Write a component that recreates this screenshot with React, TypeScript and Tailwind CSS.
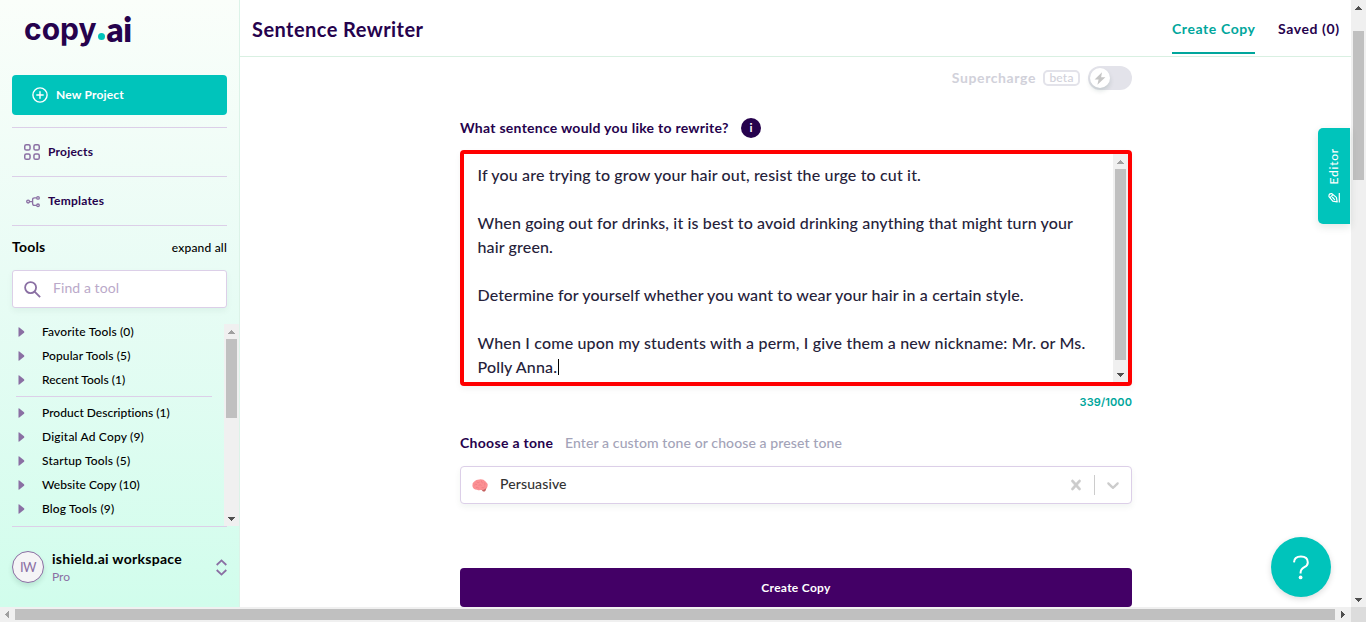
import React from "react";

type Dir = "up" | "down" | "left" | "right";

const arrowPaths: Record<Dir, string> = {
  up: "M0 6V5H1V4H2V3H3V2H4V3H5V4H6V5H7V6Z",
  down: "M0 2H7V3H6V4H5V5H4V6H3V5H2V4H1V3H0Z",
  left: "M5 0V7H4V6H3V5H2V4H1V3H2V2H3V1H4V0Z",
  right: "M2 0H3V1H4V2H5V3H6V4H5V5H4V6H3V7H2Z",
};

function Arrow({ dir, className }: { dir: Dir; className: string }) {
  return (
    <span className="flex h-[15px] w-[15px] shrink-0 items-center justify-center">
      <svg width="7" height="7" viewBox="0 0 7 7" className={className} shapeRendering="crispEdges">
        <path d={arrowPaths[dir]} fill="currentColor" />
      </svg>
    </span>
  );
}

const topTools = [
  { label: "Favorite Tools (0)", tracking: "tracking-[0.144px]" },
  { label: "Popular Tools (5)", tracking: "tracking-[0.102px]" },
  { label: "Recent Tools (1)", tracking: "tracking-[0.009px]" },
];

const categories = [
  { label: "Product Descriptions (1)", tracking: "tracking-[0.011px]" },
  { label: "Digital Ad Copy (9)", tracking: "tracking-[0.187px]" },
  { label: "Startup Tools (5)", tracking: "tracking-[0.177px]" },
  { label: "Website Copy (10)", tracking: "tracking-[0.023px]" },
  { label: "Blog Tools (9)", tracking: "tracking-[0.156px]" },
];

function ToolRow({ label, tracking }: { label: string; tracking: string }) {
  return (
    <div className="flex h-6 items-center">
      <svg width="7" height="10" viewBox="0 0 7 10" className="ml-[18px] mr-[17px] shrink-0">
        <path d="M0.5 0.8 Q0.5 0 1.3 0.4 L6 4.3 Q6.7 5 6 5.7 L1.3 9.6 Q0.5 10 0.5 9.2Z" fill="#8a6fa3" />
      </svg>
      <span className={`whitespace-nowrap text-[12px] font-medium leading-4 text-black ${tracking}`}>{label}</span>
    </div>
  );
}

function Sidebar() {
  return (
    <aside className="flex w-60 shrink-0 flex-col border-r border-[#dcf3e8] bg-linear-to-b from-[#fafefa] via-[#e9fcf5] via-45% to-[#d1fdec]">
      <div className="flex h-[75px] items-start pl-6 pt-[11px] text-[#26024d]">
        <span className="font-['Inter',sans-serif] text-[30px] font-bold leading-9">copy</span>
        <span className="ml-[2px] mt-[22px] h-[7px] w-[7px] rounded-full bg-[#00c4bb]" />
        <span className="ml-[1px] text-[33px] font-extrabold leading-9 tracking-[-0.4px]">ai</span>
      </div>
      <button className="mx-3 flex h-10 shrink-0 items-center rounded-[4px] bg-[#00c4bb] pl-5 text-white">
        <svg width="16" height="16" viewBox="0 0 16 16" fill="none" stroke="currentColor" strokeWidth="1.4" strokeLinecap="round">
          <circle cx="8" cy="8" r="7.1" />
          <path d="M8 4.8v6.4M4.8 8h6.4" />
        </svg>
        <span className="ml-2 text-[12px] font-bold leading-4 tracking-[0.184px]">New Project</span>
      </button>
      <div className="mx-3 mt-3 flex h-[49px] shrink-0 items-center border-t border-[#dccfe8] pl-3">
        <svg width="16" height="16" viewBox="0 0 16 16" fill="none" stroke="#8a6fa3" strokeWidth="1.5">
          <rect x="0.75" y="0.75" width="5.3" height="5.3" rx="1.6" />
          <rect x="9.95" y="0.75" width="5.3" height="5.3" rx="1.6" />
          <rect x="0.75" y="9.95" width="5.3" height="5.3" rx="1.6" />
          <rect x="9.95" y="9.95" width="5.3" height="5.3" rx="1.6" />
        </svg>
        <span className="ml-2 text-[12px] font-bold leading-4 tracking-[0.213px] text-[#26024d]">Projects</span>
      </div>
      <div className="mx-3 flex h-[49px] shrink-0 items-center border-t border-[#dccfe8] pl-3">
        <svg width="16" height="16" viewBox="0 0 16 16" fill="none" stroke="#8a6fa3" strokeWidth="1.3">
          <circle cx="4.1" cy="8.6" r="1.4" />
          <circle cx="14" cy="4.9" r="1.3" />
          <circle cx="14" cy="12.3" r="1.3" />
          <path d="M5.5 8.6H8.6M12.6 4.9H10.6Q8.6 4.9 8.6 6.6V10.4Q8.6 12.3 10.6 12.3H12.6" />
        </svg>
        <span className="ml-2 text-[12px] font-bold leading-4 tracking-[0.236px] text-[#26024d]">Templates</span>
      </div>
      <div className="mx-3 flex h-[45px] shrink-0 items-center justify-between border-t border-[#dccfe8] text-black">
        <span className="pb-0.5 text-[14px] font-bold leading-4 tracking-[0.2px]">Tools</span>
        <span className="text-[12px] font-medium leading-4 tracking-[0.191px]">expand all</span>
      </div>
      <div className="mx-3 flex h-[38px] shrink-0 items-center rounded-[3px] border border-[#dccfe8] bg-white pl-[11px] shadow-[0_3px_6px_rgba(0,60,40,0.05)]">
        <svg width="17" height="17" viewBox="0 0 17 17" fill="none" stroke="#8a6fa3" strokeWidth="1.8">
          <circle cx="6.6" cy="6.6" r="5.5" />
          <path d="M10.6 10.6L16.1 16.1" />
        </svg>
        <span className="ml-3 pb-0.5 text-[14px] leading-4 tracking-[0.081px] text-[#baa9c9]">Find a tool</span>
      </div>
      <div className="mt-4 flex h-[202px] shrink-0">
        <div className="-mt-1 min-w-0 flex-1">
          {topTools.map((t) => (
            <ToolRow key={t.label} {...t} />
          ))}
          <div className="mb-1 ml-4 mr-3 mt-1 h-px bg-[#dccfe8]" />
          {categories.map((t) => (
            <ToolRow key={t.label} {...t} />
          ))}
        </div>
        <div className="flex w-[15px] flex-col items-center bg-[#f0f0f0]">
          <Arrow dir="up" className="text-[#a0a0a0]" />
          <div className="h-[79px] w-[11px] bg-[#c0c0c0]" />
          <div className="mt-auto">
            <Arrow dir="down" className="text-[#505050]" />
          </div>
        </div>
      </div>
      <div className="mx-3 flex flex-1 items-center border-t border-[#dccfe8]">
        <span className="flex h-8 w-8 items-center justify-center rounded-full border border-[#8a6fa3] bg-[#f5f4f6] text-[13px] leading-4 tracking-[-0.5px] text-[#8a6fa3] shadow-[0_3px_5px_rgba(0,60,40,0.12)]">
          IW
        </span>
        <div className="ml-2 pt-px">
          <div className="text-[14px] font-bold leading-[18px] tracking-[0.28px] text-black">ishield.ai workspace</div>
          <div className="text-[12px] leading-[18px] text-[#8a6fa3]">Pro</div>
        </div>
        <svg width="11" height="17" viewBox="0 0 11 17" className="ml-auto" fill="none" stroke="#8a6fa3" strokeWidth="1.8">
          <path d="M0.7 6L5.5 1.4L10.3 6M0.7 11L5.5 15.6L10.3 11" />
        </svg>
      </div>
    </aside>
  );
}

function Header() {
  return (
    <header className="flex h-[57px] shrink-0 border-b border-[#d9f0e2] pl-3 pr-3">
      <h1 className="mt-[17px] text-[20px] font-bold leading-6 tracking-[0.444px] text-[#26024d]">Sentence Rewriter</h1>
      <nav className="ml-auto flex gap-[23px]">
        <div className="h-[54px] w-[83px] whitespace-nowrap border-b-2 border-[#00a69c] pt-[21px] text-[14px] font-bold leading-4 tracking-[0.594px] text-[#00a69c]">
          Create Copy
        </div>
        <div className="w-[61px] whitespace-nowrap pt-[21px] text-[14px] font-bold leading-4 tracking-[0.585px] text-[#26024d]">Saved (0)</div>
      </nav>
    </header>
  );
}

function SentenceBox() {
  return (
    <div className="mt-3 flex h-[236px] shrink-0 rounded-[4px] border-4 border-[#ff0000] bg-white shadow-[0_3px_6px_rgba(0,60,40,0.05)]">
      <div className="flex-1 whitespace-nowrap pl-[13.5px] pt-[9px] text-[16px] font-medium leading-6 text-[#26223a]">
        <p className="tracking-[0.155px]">If you are trying to grow your hair out, resist the urge to cut it.</p>
        <p className="mt-6 tracking-[0.14px]">
          When going out for drinks, it is best to avoid drinking anything that might turn your
          <br />
          hair green.
        </p>
        <p className="mt-6 tracking-[0.135px]">Determine for yourself whether you want to wear your hair in a certain style.</p>
        <p className="mt-6 tracking-[0.175px]">When I come upon my students with a perm, I give them a new nickname: Mr. or Ms.</p>
        <p className="flex items-center tracking-[0.15px]">
          Polly Anna.
          <span className="ml-px h-4 w-px bg-black" />
        </p>
      </div>
      <div className="flex w-[15px] flex-col items-center bg-[#f0f0f0]">
        <Arrow dir="up" className="text-[#a0a0a0]" />
        <div className="h-[191px] w-[11px] bg-[#c0c0c0]" />
        <div className="mt-auto">
          <Arrow dir="down" className="text-[#505050]" />
        </div>
      </div>
    </div>
  );
}

function Brain() {
  return (
    <svg width="16" height="13" viewBox="0 0 16 13">
      <path d="M8.8 10L14.6 8.6L13.6 11.4Q12.6 13 11 12.5Z" fill="#c4605f" />
      <path d="M0.4 7Q0 4 2.3 2.6Q4 0.3 7.5 0.4Q11.5 0 13.6 2.4Q16 4.2 15.6 7Q15.5 9.4 13.2 9.8Q12 11.4 9.8 10.8Q7 11.8 5 10.7Q1 10.5 0.4 7Z" fill="#fb9093" />
      <path
        d="M2.2 6.3Q3.5 4.6 5 5.6M4.6 2.7Q6 4.6 7.6 3M9.5 1.6Q9 3.6 11 4.2M6.6 6.4Q8.2 5 9.6 6.6M12 3.4Q13.6 4.6 12.6 6.4M4 8.8Q5.6 7.6 6.8 9.2M9.6 8.6Q11.6 9.2 12.6 7.8"
        stroke="#e8737a"
        strokeWidth="0.5"
        fill="none"
      />
    </svg>
  );
}

function ToneSelect() {
  return (
    <div className="mt-[14px] flex h-[38px] shrink-0 items-center rounded-[4px] border border-[#dccfe8] bg-white pl-[11px] shadow-[0_3px_6px_rgba(0,60,40,0.06)]">
      <Brain />
      <span className="ml-3 pb-0.5 text-[14px] font-medium leading-4 tracking-[0.113px] text-[#333333]">Persuasive</span>
      <svg width="20" height="20" viewBox="0 0 20 20" className="ml-auto fill-[#cccccc] stroke-[#cccccc] stroke-[0.5]">
        <path d="M14.348 14.849c-0.469 0.469-1.229 0.469-1.697 0l-2.651-3.030-2.651 3.029c-0.469 0.469-1.229 0.469-1.697 0-0.469-0.469-0.469-1.229 0-1.697l2.758-3.15-2.759-3.152c-0.469-0.469-0.469-1.228 0-1.697s1.228-0.469 1.697 0l2.652 3.031 2.651-3.031c0.469-0.469 1.228-0.469 1.697 0s0.469 1.229 0 1.697l-2.758 3.152 2.758 3.15c0.469 0.469 0.469 1.229 0 1.698z" />
      </svg>
      <span className="ml-2 h-5 w-px bg-[#cccccc]" />
      <svg width="20" height="20" viewBox="0 0 20 20" className="ml-2 mr-2 fill-[#cccccc]">
        <path d="M4.516 7.548c0.436-0.446 1.043-0.481 1.576 0l3.908 3.747 3.908-3.747c0.533-0.481 1.141-0.446 1.574 0 0.436 0.445 0.408 1.197 0 1.615-0.406 0.418-4.695 4.502-4.695 4.502-0.217 0.223-0.502 0.335-0.787 0.335s-0.57-0.112-0.789-0.335c0 0-4.287-4.084-4.695-4.502s-0.436-1.17 0-1.615z" />
      </svg>
    </div>
  );
}

function MainForm() {
  return (
    <div className="ml-[220px] flex min-h-0 w-[672px] flex-1 flex-col">
      <div className="mt-[9px] flex h-6 shrink-0 items-center justify-end">
        <span className="text-[14px] font-bold leading-4 tracking-[0.6px] text-[#d1d1da]">Supercharge</span>
        <span className="ml-[7px] flex h-4 w-[37px] items-center justify-center rounded-[5px] border-2 border-[#e3e3ea] text-[12px] font-medium leading-3 tracking-[0.2px] text-[#d1d1da]">
          beta
        </span>
        <span className="ml-2 flex h-6 w-11 items-center rounded-full bg-[#e3e3ea] pl-[2px]">
          <span className="flex h-5 w-5 items-center justify-center rounded-full bg-white shadow-[0_3px_5px_rgba(0,60,40,0.14)]">
            <svg width="12" height="13" viewBox="0 0 12 13">
              <path d="M8 0.3L0.6 7.6H4.6L3.4 12.7L11.4 5.2H7.1Z" fill="#c6c6c6" />
            </svg>
          </span>
        </span>
      </div>
      <div className="mt-7 flex h-5 shrink-0 items-center">
        <span className="whitespace-nowrap pb-px text-[14px] font-bold leading-4 tracking-[0.264px] text-[#26024d]">What sentence would you like to rewrite?</span>
        <span className="ml-auto mr-[371px] flex h-5 w-5 items-center justify-center rounded-full bg-[#26024d] text-[12px] font-bold leading-4 text-white">
          i
        </span>
      </div>
      <SentenceBox />
      <div className="mt-2 shrink-0 text-right font-['Inter',sans-serif] text-[11px] font-semibold leading-4 tracking-[0.1px] text-[#00a69c]">339/1000</div>
      <div className="mt-6 flex h-[18px] shrink-0 items-center whitespace-nowrap text-[14px] leading-4">
        <span className="w-[93px] font-bold tracking-[0.304px] text-[#26024d]">Choose a tone</span>
        <span className="ml-3 font-medium tracking-[0.11px] text-[#a3a3b8]">Enter a custom tone or choose a preset tone</span>
      </div>
      <ToneSelect />
      <button className="mt-16 flex h-[39px] shrink-0 items-center justify-center rounded-[4px] bg-[#430066] text-[12px] font-bold leading-4 tracking-[0.295px] text-white">
        Create Copy
      </button>
    </div>
  );
}

export default function App() {
  return (
    <div className="flex h-[622px] w-[1366px] flex-col overflow-hidden bg-white font-['Lato',sans-serif]">
      <div className="flex h-[607px] shrink-0">
        <Sidebar />
        <main className="relative flex min-w-0 flex-1 flex-col">
          <Header />
          <MainForm />
          <div className="absolute right-px top-32 flex h-24 w-8 items-center justify-center rounded-l-[5px] bg-[#00c4bb] pr-px text-white shadow-[0_3px_8px_rgba(0,60,40,0.12)]">
            <div className="flex rotate-180 items-center [writing-mode:vertical-rl]">
              <svg width="12" height="11" viewBox="0 0 12 11" className="mb-2 rotate-180" fill="none" stroke="currentColor" strokeWidth="1.2">
                <path d="M11.3 0.5V10.2" />
                <path d="M1 4.2Q0.6 1 3.6 1.2L8.4 5L9.2 9.4L4.8 8.8Z" strokeLinejoin="round" />
                <path d="M2 5.2L5 2.2M4.2 4.6L6.8 7.4" />
              </svg>
              <span className="text-[12px] font-medium leading-4 tracking-[0.75px]">Editor</span>
            </div>
          </div>
          <div className="absolute bottom-[10px] right-5 flex h-[60px] w-[60px] items-center justify-center rounded-full bg-[#00c4bb] shadow-[0_2px_6px_rgba(0,0,0,0.14)]">
            <svg width="18" height="25" viewBox="0 0 18 25" fill="none" stroke="white" strokeWidth="2">
              <path d="M2 7.4Q2.2 1.6 8.9 1.6Q15.8 1.6 15.8 7.4Q15.8 10.3 12.4 12.2Q8.6 14.3 8.6 17.6V18.4" />
              <circle cx="8.6" cy="22.4" r="1.9" fill="white" stroke="none" />
            </svg>
          </div>
        </main>
        <div className="flex w-[15px] shrink-0 flex-col items-center bg-[#f0f0f0]">
          <Arrow dir="up" className="text-[#505050]" />
          <div className="mt-4 h-[149px] w-[11px] bg-[#c0c0c0]" />
          <div className="mt-auto">
            <Arrow dir="down" className="text-[#505050]" />
          </div>
        </div>
      </div>
      <div className="flex h-[15px] shrink-0 items-center bg-[#f0f0f0]">
        <Arrow dir="left" className="text-[#a0a0a0]" />
        <div className="h-[11px] w-[1320px] bg-[#c0c0c0]" />
        <Arrow dir="right" className="text-[#505050]" />
        <div className="ml-auto h-[15px] w-[15px] bg-[#dcdcdc]" />
      </div>
    </div>
  );
}
